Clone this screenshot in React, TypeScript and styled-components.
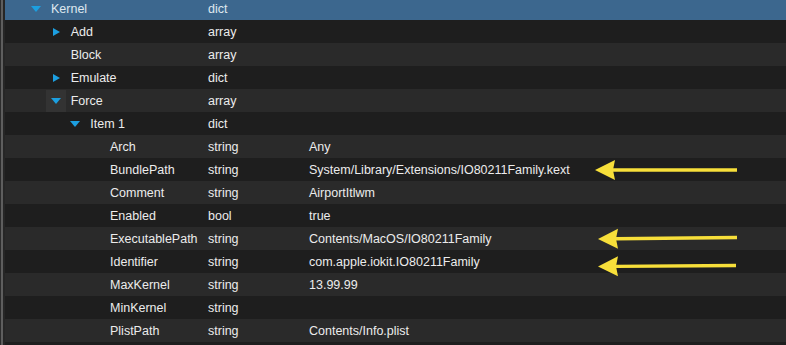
import React from "react";
import styled, { createGlobalStyle } from "styled-components";

const Global = createGlobalStyle`
  html, body {
    margin: 0;
    padding: 0;
    background: #1e1e1e;
  }
  body {
    font-family: "Liberation Sans", Arial, sans-serif;
    -webkit-font-smoothing: antialiased;
  }
`;

interface Entry {
  key: string;
  type: string;
  value?: string;
  depth: number;
  toggle?: "open" | "closed";
  selected?: boolean;
  hover?: boolean;
}

const rows: Entry[] = [
  { key: "Kernel", type: "dict", depth: 0, toggle: "open", selected: true },
  { key: "Add", type: "array", depth: 1, toggle: "closed" },
  { key: "Block", type: "array", depth: 1 },
  { key: "Emulate", type: "dict", depth: 1, toggle: "closed" },
  { key: "Force", type: "array", depth: 1, toggle: "open", hover: true },
  { key: "Item 1", type: "dict", depth: 2, toggle: "open" },
  { key: "Arch", type: "string", value: "Any", depth: 3 },
  { key: "BundlePath", type: "string", value: "System/Library/Extensions/IO80211Family.kext", depth: 3 },
  { key: "Comment", type: "string", value: "AirportItlwm", depth: 3 },
  { key: "Enabled", type: "bool", value: "true", depth: 3 },
  { key: "ExecutablePath", type: "string", value: "Contents/MacOS/IO80211Family", depth: 3 },
  { key: "Identifier", type: "string", value: "com.apple.iokit.IO80211Family", depth: 3 },
  { key: "MaxKernel", type: "string", value: "13.99.99", depth: 3 },
  { key: "MinKernel", type: "string", value: "", depth: 3 },
  { key: "PlistPath", type: "string", value: "Contents/Info.plist", depth: 3 },
  { key: "", type: "", depth: 3 },
];

// arrows drawn over the value column
const arrows = [
  { tipX: 595, tipY: 170, endX: 737, endY: 170 },
  { tipX: 598, tipY: 239, endX: 737, endY: 237.5 },
  { tipX: 598, tipY: 266.5, endX: 736, endY: 265.5 },
];

const Window = styled.div`
  position: relative;
  width: 786px;
  height: 345px;
  overflow: hidden;
  display: flex;
  background: #1e1e1e;
`;

const Rail = styled.div`
  width: 5px;
  flex: none;
  background: linear-gradient(
    to right,
    #2c2c2c 0,
    #2c2c2c 1px,
    #5e5e5e 1px,
    #5e5e5e 3px,
    #262626 3px,
    #262626 5px
  );
`;

const Outline = styled.div`
  flex: 1;
  display: flex;
  flex-direction: column;
  margin-top: -3px;
`;

const Row = styled.div<{ $odd: boolean; $selected?: boolean }>`
  height: 23px;
  flex: none;
  display: grid;
  grid-template-columns: 203px 101px 1fr;
  align-items: center;
  font-size: 12.5px;
  color: ${(p) => (p.$selected ? "#dfe7ef" : "#ececec")};
  background: ${(p) =>
    p.$selected ? "#3c678e" : p.$odd ? "#2a2a2a" : "#1e1e1e"};
`;

const KeyCell = styled.div<{ $depth: number }>`
  display: flex;
  align-items: center;
  height: 100%;
  padding-left: ${(p) => 21 + p.$depth * 19.67}px;
`;

const ToggleBox = styled.div<{ $hover?: boolean }>`
  width: 20px;
  height: 22px;
  margin-right: 5px;
  display: flex;
  align-items: center;
  justify-content: center;
  background: ${(p) => (p.$hover ? "#333333" : "transparent")};
`;

const Down = styled.span`
  width: 0;
  height: 0;
  border-left: 5px solid transparent;
  border-right: 5px solid transparent;
  border-top: 6px solid #1c9fe0;
  margin-top: 1px;
`;

const Right = styled.span`
  width: 0;
  height: 0;
  border-top: 4.5px solid transparent;
  border-bottom: 4.5px solid transparent;
  border-left: 7px solid #1c9fe0;
  margin-left: 1px;
`;

const Cell = styled.div`
  white-space: nowrap;
`;

const Overlay = styled.svg`
  position: absolute;
  left: 0;
  top: 0;
  pointer-events: none;
`;

const Arrow = ({ tipX, tipY, endX, endY }: (typeof arrows)[number]) => {
  const back = tipX + 20;
  const midY = tipY + (endY - tipY) * ((back - tipX) / (endX - tipX));
  return (
    <g>
      <line x1={back - 2} y1={midY} x2={endX} y2={endY} stroke="#f7df3a" strokeWidth={3.4} />
      <polygon
        points={`${tipX},${tipY} ${back},${midY - 10} ${back - 2},${midY} ${back},${midY + 10}`}
        fill="#f7df3a"
      />
    </g>
  );
};

export default function App() {
  return (
    <>
      <Global />
      <Window>
        <Rail />
        <Outline>
          {rows.map((r, i) => (
            <Row key={i} $odd={i % 2 === 0} $selected={r.selected}>
              <KeyCell $depth={r.depth}>
                <ToggleBox $hover={r.hover}>
                  {r.toggle === "open" && <Down />}
                  {r.toggle === "closed" && <Right />}
                </ToggleBox>
                {r.key}
              </KeyCell>
              <Cell>{r.type}</Cell>
              <Cell>{r.value}</Cell>
            </Row>
          ))}
        </Outline>
        <Overlay width={786} height={345}>
          {arrows.map((a, i) => (
            <Arrow key={i} {...a} />
          ))}
        </Overlay>
      </Window>
    </>
  );
}
